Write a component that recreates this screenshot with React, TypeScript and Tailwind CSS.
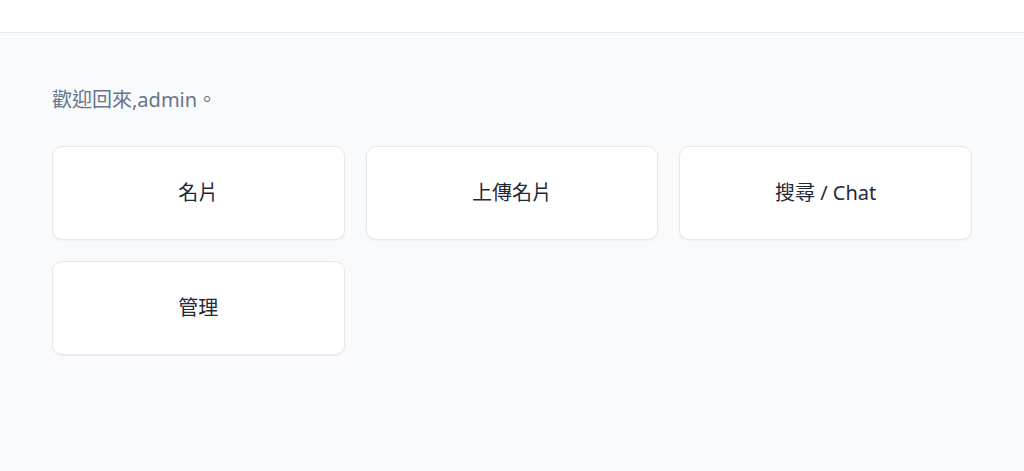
const tiles = ['名片', '上傳名片', '搜尋 / Chat', '管理']

export default function App() {
  return (
    <div
      className="min-h-[471px] bg-[#f8fafc]"
      style={{ fontFamily: '"Noto Sans", "Noto Sans CJK TC", sans-serif' }}
    >
      {/* top bar */}
      <header className="h-[33px] bg-white border-b border-[#e8ebf0]" />

      <main className="px-[52px] pt-[53px]">
        <p className="text-[20px] leading-[28px] text-[#66758c] mb-[32px]">歡迎回來,admin。</p>

        <div className="grid grid-cols-3 gap-[21px]">
          {tiles.map((t) => (
            <button
              key={t}
              className="h-[94px] flex items-center justify-center bg-white border border-[#e5e7eb] rounded-[10px] shadow-[0_1px_2px_rgba(15,23,42,0.05)] text-[20px] text-[#1f2937]"
            >
              {t}
            </button>
          ))}
        </div>
      </main>
    </div>
  )
}
